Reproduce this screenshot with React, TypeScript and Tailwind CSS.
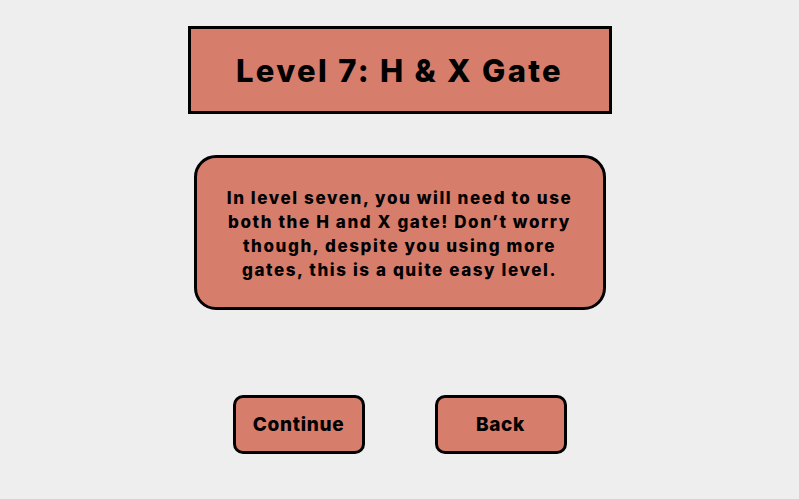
import React from "react";

const lines = [
  "In level seven, you will need to use",
  "both the H and X gate! Don\u2019t worry",
  "though, despite you using more",
  "gates, this is a quite easy level.",
];

function LevelButton({ label }: { label: string }) {
  return (
    <button className="flex h-[59px] w-[132px] items-center justify-center rounded-[10px] border-[3px] border-black bg-[#d77d6b] pt-[2px] text-[19px] font-extrabold tracking-[0.7px] text-black">
      {label}
    </button>
  );
}

export default function App() {
  return (
    <div
      className="flex h-[499px] w-full flex-col items-center bg-[#eeeeee] pt-[26px] text-black"
      style={{ fontFamily: "Inter, 'Noto Sans', sans-serif" }}
    >
      <div className="flex h-[88px] w-[424px] items-center justify-center border-[3px] border-black bg-[#d77d6b]">
        <h1 className="text-[31px] font-extrabold leading-none tracking-[2.3px]">Level 7: H &amp; X Gate</h1>
      </div>

      <div className="mt-[41px] flex h-[155px] w-[412px] flex-col items-center justify-center rounded-[22px] border-[3px] border-black bg-[#d77d6b] pt-[2px] text-center text-[17px] font-extrabold leading-[24px] tracking-[1.6px]">
        {lines.map((l) => (
          <span key={l}>{l}</span>
        ))}
      </div>

      <div className="mt-[85px] flex gap-[70px]">
        <LevelButton label="Continue" />
        <LevelButton label="Back" />
      </div>
    </div>
  );
}
